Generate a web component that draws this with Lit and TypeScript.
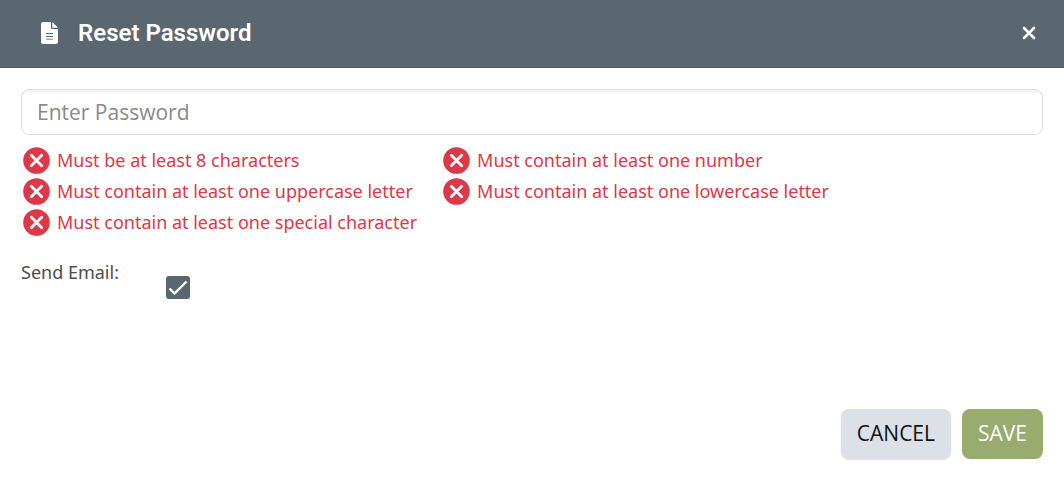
import { LitElement, html, css, svg } from "lit";
import { customElement, state } from "lit/decorators.js";

const documentIcon = svg`
  <svg class="title-icon" viewBox="0 0 17 22" aria-hidden="true">
    <path fill="currentColor" d="M2 0h8v5.500a1.500 1.500 0 0 0 1.500 1.500H17v13a2 2 0 0 1-2 2H2a2 2 0 0 1-2-2V2a2 2 0 0 1 2-2zM11.300 0l5.700 5.800h-5.700z"/>
    <path stroke="#5b6770" stroke-width="1" d="M5 11.500h7M5 14.500h7"/>
    <path stroke="#5b6770" stroke-opacity=".6" stroke-width="1.400" d="M5 17.300h7"/>
  </svg>`;

const closeIcon = svg`
  <svg class="close-icon" viewBox="0 0 14 14" aria-hidden="true">
    <path fill="none" stroke="currentColor" stroke-width="2.600" stroke-linecap="round" d="M2 2l10 10M12 2L2 12"/>
  </svg>`;

const failedIcon = svg`
  <svg class="rule-icon" viewBox="0 0 27 27" aria-hidden="true">
    <circle cx="13.500" cy="13.500" r="13.300" fill="currentColor"/>
    <path fill="none" stroke="#fff" stroke-width="2.800" stroke-linecap="round" d="M8.300 8.300l10.400 10.400M18.700 8.300L8.300 18.700"/>
  </svg>`;

@customElement("app-root")
export class AppRoot extends LitElement {
  static styles = css`
    :host {
      display: flex;
      flex-direction: column;
      min-height: 100vh;
      box-sizing: border-box;
      background: #fff;
      color: #4d4d4d;
      font-family: "Noto Sans", "Open Sans", sans-serif;
    }
    header {
      display: flex;
      align-items: center;
      box-sizing: border-box;
      height: 68px;
      padding: 0 28px 2px 41px;
      background: #5b6770;
      border-bottom: 1px solid #4f5a64;
      color: #fff;
    }
    .title-icon {
      width: 17px;
      height: 22px;
      margin-right: 20px;
    }
    h1 {
      flex: 1;
      margin: 0;
      font: 600 24px/32px Roboto, sans-serif;
    }
    .close {
      display: flex;
      padding: 0;
      border: 0;
      background: none;
      color: inherit;
      cursor: pointer;
    }
    .close-icon {
      width: 14px;
      height: 14px;
    }
    form {
      flex: 1;
      display: flex;
      flex-direction: column;
      padding: 21px 21px 23px;
    }
    .password {
      box-sizing: border-box;
      width: 100%;
      height: 46px;
      padding: 0 15px;
      border: 1px solid #dce0e7;
      border-radius: 8px;
      box-shadow: inset 0 2px 3px rgba(0, 0, 0, 0.06);
      background: #fff;
      color: #333;
      font: 21px/28px "Open Sans", "Noto Sans", sans-serif;
    }
    .password::placeholder {
      color: #8a8a8a;
      opacity: 1;
    }
    .rules {
      display: grid;
      grid-template-columns: max-content max-content;
      gap: 4px 26px;
      margin: 12px 0 0;
      padding: 0 2px;
      list-style: none;
      color: #dc3848;
      font-size: 18px;
      line-height: 27px;
    }
    .rules li {
      display: flex;
      align-items: center;
      gap: 7px;
    }
    .rule-icon {
      width: 27px;
      height: 27px;
    }
    .email {
      display: flex;
      align-items: flex-start;
      margin-top: 23px;
      font-size: 18px;
      line-height: 27px;
    }
    .email label {
      width: 145px;
    }
    .check {
      appearance: none;
      width: 24px;
      height: 23px;
      margin: 17px 0 0;
      border-radius: 3px;
      border: 2px solid #5b6770;
      box-sizing: border-box;
      cursor: pointer;
    }
    .check:checked {
      border: 0;
      background: #5b6770
        url("data:image/svg+xml,%3Csvg xmlns='http://www.w3.org/2000/svg' viewBox='0 0 24 24'%3E%3Cpath d='M3.500 13l5 5L20.500 6' fill='none' stroke='white' stroke-width='2.400'/%3E%3C/svg%3E")
        center / 100% no-repeat;
    }
    .actions {
      display: flex;
      justify-content: flex-end;
      gap: 11px;
      margin-top: auto;
    }
    .button {
      height: 50px;
      padding: 0 16px 2px;
      border: 0;
      border-radius: 8px;
      font: 21px/28px "Open Sans", "Noto Sans", sans-serif;
      cursor: pointer;
    }
    .cancel {
      background: #dce0e7;
      box-shadow: 0 1px 2px rgba(0, 0, 0, 0.12);
      color: #111;
    }
    .save {
      background: #99ab6e;
      color: #fff;
    }
  `;

  @state() private sendEmail = true;

  private rules = [
    "Must be at least 8 characters",
    "Must contain at least one number",
    "Must contain at least one uppercase letter",
    "Must contain at least one lowercase letter",
    "Must contain at least one special character",
  ];

  render() {
    return html`
      <header>
        ${documentIcon}
        <h1>Reset Password</h1>
        <button class="close" type="button" aria-label="Close">${closeIcon}</button>
      </header>
      <form @submit=${(e: Event) => e.preventDefault()}>
        <input class="password" type="password" placeholder="Enter Password" aria-label="Enter Password" />
        <ul class="rules">
          ${this.rules.map((rule) => html`<li>${failedIcon}<span>${rule}</span></li>`)}
        </ul>
        <div class="email">
          <label for="send-email">Send Email:</label>
          <input
            class="check"
            id="send-email"
            type="checkbox"
            .checked=${this.sendEmail}
            @change=${(e: Event) => (this.sendEmail = (e.target as HTMLInputElement).checked)}
          />
        </div>
        <div class="actions">
          <button class="button cancel" type="button">CANCEL</button>
          <button class="button save" type="submit">SAVE</button>
        </div>
      </form>
    `;
  }
}
